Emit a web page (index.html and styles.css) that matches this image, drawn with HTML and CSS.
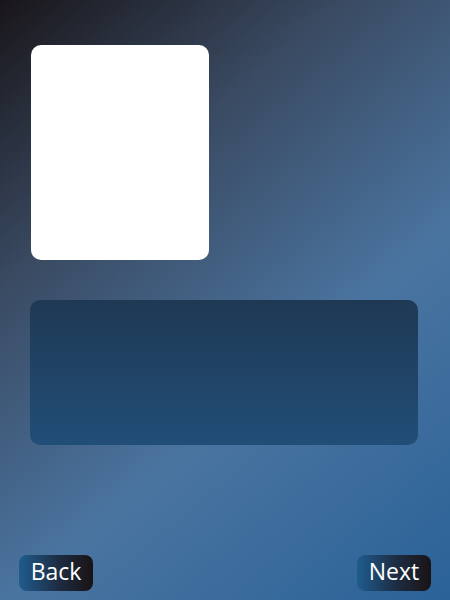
FILE: index.html
```html
<!DOCTYPE html>
<html>
<head>
<meta charset="utf-8">
<link rel="stylesheet" href="styles.css">
</head>
<body>
<div class="screen">
  <div class="photo"></div>
  <div class="panel"></div>
  <div class="spacer"></div>
  <div class="nav">
    <button class="btn">Back</button>
    <button class="btn">Next</button>
  </div>
</div>
</body>
</html>
```
FILE: styles.css
```css
html, body {
  margin: 0;
  padding: 0;
}
body {
  width: 450px;
  height: 600px;
  overflow: hidden;
  font-family: "Open Sans", "Noto Sans", sans-serif;
}
.screen {
  box-sizing: border-box;
  width: 450px;
  height: 600px;
  background: linear-gradient(140deg, #19161a 0%, #3a4b63 30%, #4a74a0 62%, #2a6298 100%);
  display: flex;
  flex-direction: column;
  padding: 45px 32px 9px 19px;
}
.photo {
  width: 178px;
  height: 215px;
  margin-left: 12px;
  background: #ffffff;
  border-radius: 10px;
}
.panel {
  margin-top: 40px;
  margin-left: 11px;
  width: 388px;
  height: 145px;
  border-radius: 10px;
  background: linear-gradient(180deg, #1f3954 0%, #214e77 100%);
}
.spacer {
  flex: 1;
}
.nav {
  display: flex;
  justify-content: space-between;
  margin-right: -13px;
}
.btn {
  width: 74px;
  height: 36px;
  border: none;
  border-radius: 8px;
  background: linear-gradient(90deg, #1f5c8e 0%, #1d2b40 55%, #1a1315 100%);
  color: #ffffff;
  font-family: "Open Sans", "Noto Sans", sans-serif;
  font-size: 23px;
  line-height: 32px;
  padding: 0 0 4px 0;
}
```
